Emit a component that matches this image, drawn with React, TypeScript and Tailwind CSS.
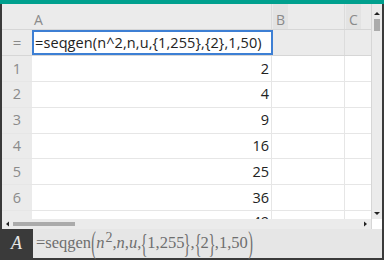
const serif = { fontFamily: '"Liberation Serif", "DejaVu Serif", serif' };

function Delim({ c, big }: { c: string; big?: boolean }) {
  return (
    <span
      className={
        big
          ? "inline-flex w-[5px] h-[26px] items-center justify-center text-[31px] leading-[26px] scale-x-[0.45] font-light -mt-[1px]"
          : "inline-flex w-[6px] h-[24px] items-center justify-center text-[27px] leading-[24px] scale-x-[0.55]"
      }
    >
      {c}
    </span>
  );
}

export default function App() {
  const rows = [
    { n: 1, v: "2" },
    { n: 2, v: "4" },
    { n: 3, v: "9" },
    { n: 4, v: "16" },
    { n: 5, v: "25" },
    { n: 6, v: "36" },
  ];
  const sans = { fontFamily: '"Open Sans", "Noto Sans", sans-serif' };

  return (
    <div className="w-[384px] h-[260px] flex flex-col bg-[#3a3a3a] overflow-hidden" style={sans}>
      <div className="h-[4px] bg-[#00a08e] shrink-0" />
      <div className="flex flex-1 min-h-0 pl-[2px] pr-[2px]">
        {/* grid */}
        <div className="flex flex-col w-[370px] bg-white">
          {/* column headers */}
          <div className="flex h-[26px] bg-[#ebebeb] border-b border-[#d6d6d6] text-[14px] text-[#8a8a8a]">
            <div className="w-[30px]" />
            <div className="w-[240px] border-r border-[#dcdcdc] pl-[2px] pt-[5px]">A</div>
            <div className="w-[73px] border-r border-[#dcdcdc] flex pl-[1px]">
              <span className="bg-[#e3e3e3] px-[3px] pt-[5px]">B</span>
            </div>
            <div className="flex-1 flex pl-[1px]">
              <span className="bg-[#e3e3e3] px-[3px] pt-[5px]">C</span>
            </div>
          </div>
          {/* formula row */}
          <div className="flex h-[26px] bg-[#ebebeb] border-b border-[#d6d6d6]">
            <div className="w-[30px] flex items-center justify-center text-[15px] text-[#8a8a8a]">=</div>
            <div className="w-[241px] border-2 border-[#3d7fd4] bg-white flex items-center pl-[1px] text-[14.5px] text-[#222] tracking-[0.1px]">
              =seqgen(n^2,n,u,{"{"}1,255{"}"},{"{"}2{"}"},1,50)
            </div>
            <div className="w-[72px] border-r border-[#dcdcdc]" />
            <div className="flex-1" />
          </div>
          {/* data rows */}
          {rows.map((r) => (
            <div key={r.n} className="flex h-[26px] border-b border-[#e6e6e6] text-[14.5px]">
              <div className="w-[30px] bg-[#ebebeb] flex items-center justify-center text-[#8a8a8a]">{r.n}</div>
              <div className="w-[240px] border-r border-[#e6e6e6] flex items-center justify-end pr-[2px] text-[#222]">{r.v}</div>
              <div className="w-[73px] border-r border-[#e6e6e6]" />
              <div className="flex-1" />
            </div>
          ))}
          <div className="flex h-[8px] overflow-hidden text-[14.5px]">
            <div className="w-[30px] bg-[#ebebeb]" />
            <div className="w-[240px] border-r border-[#e6e6e6] flex justify-end pr-[2px] text-[#222] leading-[28px]">
              <span className="-mt-[3px]">49</span>
            </div>
            <div className="w-[73px] border-r border-[#e6e6e6]" />
            <div className="flex-1" />
          </div>
          {/* horizontal scrollbar */}
          <div className="h-[10px] bg-[#ebebeb] flex items-center relative">
            <svg width="6" height="6" viewBox="0 0 6 6" className="ml-[3px]">
              <path d="M1 3 L4 0.5 L4 5.5 Z" fill="#222" />
            </svg>
            <div className="ml-[2px] w-[62px] h-[4px] bg-[#ababab]" />
            <svg width="6" height="6" viewBox="0 0 6 6" className="absolute right-[3px]">
              <path d="M5 3 L2 0.5 L2 5.5 Z" fill="#222" />
            </svg>
          </div>
        </div>
        {/* vertical scrollbar */}
        <div className="flex-1 flex flex-col bg-[#ebebeb] border-l border-[#d6d6d6]">
          <svg width="10" height="8" viewBox="0 0 10 8" className="mt-[6px]">
            <path d="M5 2 L8 5 L2 5 Z" fill="#222" />
          </svg>
          <div className="mx-[2px] mt-[1px] h-[12px] bg-[#ababab]" />
          <div className="flex-1" />
          <svg width="10" height="8" viewBox="0 0 10 8" className="mb-[2px]">
            <path d="M5 6 L8 3 L2 3 Z" fill="#222" />
          </svg>
          <div className="h-[10px] bg-white" />
        </div>
      </div>
      {/* entry line */}
      <div className="flex h-[29px] shrink-0 mb-[2px] pr-[2px]">
        <div className="w-[33px] flex items-center justify-center italic text-[18px] text-[#e6e6e6]" style={serif}>
          A
        </div>
        <div className="flex-1 bg-[#e6e6e6] flex items-center pl-[3px] text-[16.5px] text-[#6e6e6e]" style={serif}>
          <span>=seqgen</span>
          <Delim c="(" big />
          <span className="italic">n</span>
          <span className="text-[14px] -mt-[12px] ml-[1px]">2</span>
          <span>,</span>
          <span className="italic">n</span>
          <span>,</span>
          <span className="italic">u</span>
          <span>,</span>
          <Delim c="{" />
          <span>1,255</span>
          <Delim c="}" />
          <span>,</span>
          <Delim c="{" />
          <span>2</span>
          <Delim c="}" />
          <span>,1,50</span>
          <Delim c=")" big />
        </div>
      </div>
    </div>
  );
}
